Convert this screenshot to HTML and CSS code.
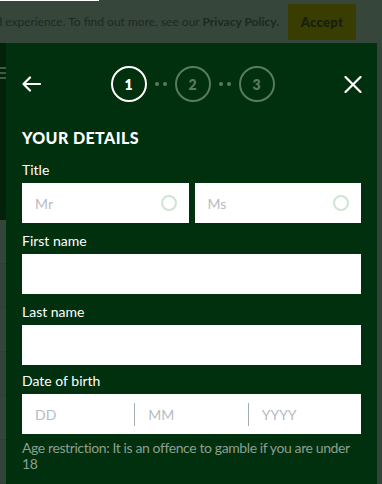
FILE: index.html
```html
<!DOCTYPE html>
<html lang="en">
<head>
    <meta charset="UTF-8">
    <meta name="viewport" content="width=device-width, initial-scale=1.0">
    <title>Register - Your details</title>
    <link rel="stylesheet" href="styles.css">
</head>
<body>
    <div class="top-strip"></div>
    <div class="cookie-bar">
        <p class="cookie-text">We use cookies to give you a personalized experience. To find out more, see our <b>Privacy Policy.</b></p>
        <button class="cookie-accept">Accept</button>
    </div>
    <div class="stage">
        <div class="page-edge">
            <div class="edge-nav"><span></span><span></span><span></span></div>
            <div class="edge-rows">
                <div class="edge-row"></div>
                <div class="edge-row alt"></div>
                <div class="edge-row"></div>
                <div class="edge-row alt"></div>
                <div class="edge-row"></div>
                <div class="edge-row alt"></div>
            </div>
        </div>
        <div class="modal">
            <div class="modal-header">
                <button class="icon-btn" aria-label="Back">
                    <svg width="19" height="16" viewBox="0 0 19 16"><path d="M18 8H1.5M8 1.5L1.5 8 8 14.5" fill="none" stroke="#fff" stroke-width="2.2" stroke-linecap="round" stroke-linejoin="round"/></svg>
                </button>
                <div class="steps">
                    <span class="step active">1</span>
                    <span class="step-dots"><i></i><i></i></span>
                    <span class="step">2</span>
                    <span class="step-dots"><i></i><i></i></span>
                    <span class="step">3</span>
                </div>
                <button class="icon-btn" aria-label="Close">
                    <svg width="18" height="17" viewBox="0 0 18 17"><path d="M1.5 1l15 15M16.5 1l-15 15" fill="none" stroke="#fff" stroke-width="2.2" stroke-linecap="round"/></svg>
                </button>
            </div>

            <h2 class="form-title">YOUR DETAILS</h2>

            <div class="field">
                <label>Title</label>
                <div class="title-options">
                    <div class="radio-box">
                        <span class="placeholder">Mr</span>
                        <span class="radio"></span>
                    </div>
                    <div class="radio-box">
                        <span class="placeholder">Ms</span>
                        <span class="radio"></span>
                    </div>
                </div>
            </div>

            <div class="field">
                <label>First name</label>
                <div class="text-input"></div>
            </div>

            <div class="field">
                <label>Last name</label>
                <div class="text-input"></div>
            </div>

            <div class="field dob">
                <label>Date of birth</label>
                <div class="dob-input">
                    <span class="dob-part">DD</span>
                    <span class="dob-part">MM</span>
                    <span class="dob-part">YYYY</span>
                </div>
                <p class="hint">Age restriction: It is an offence to gamble if you are under 18</p>
            </div>
        </div>
    </div>
</body>
</html>
```

FILE: styles.css
```css
body {
    margin: 0;
    width: 382px;
    height: 484px;
    overflow: hidden;
    background: #34443a;
    font-family: Lato, "Open Sans", sans-serif;
    position: relative;
}
.top-strip {
    position: absolute;
    top: 0;
    left: 0;
    width: 99px;
    height: 1px;
    background: #fff;
}
.cookie-bar {
    height: 43px;
    display: flex;
    align-items: center;
    justify-content: flex-end;
    padding-right: 26px;
    background: #36463b;
    overflow: hidden;
}
.cookie-text {
    margin: 0 9px 0 0;
    white-space: nowrap;
    font-size: 12px;
    color: #1c2a1f;
}
.cookie-text b {
    font-weight: 700;
}
.cookie-accept {
    flex-shrink: 0;
    width: 68px;
    height: 36px;
    border: none;
    background: #3a3d02;
    color: #17210e;
    font-family: inherit;
    font-weight: 800;
    font-size: 13px;
    letter-spacing: 0.3px;
    padding: 0;
}
.stage {
    display: flex;
    height: 441px;
}
.page-edge {
    width: 6px;
    display: flex;
    flex-direction: column;
}
.edge-nav {
    height: 177px;
    background: #03220b;
    display: flex;
    flex-direction: column;
    gap: 3px;
    padding-top: 24px;
    box-sizing: border-box;
}
.edge-nav span {
    height: 2px;
    background: #3e5a44;
}
.edge-rows {
    flex: 1;
    display: flex;
    flex-direction: column;
}
.edge-row {
    flex: 1;
    background: #34463a;
    border-bottom: 1px solid #2e3f34;
}
.edge-row.alt {
    background: #324338;
}
.modal {
    width: 371px;
    background: #01300e;
    padding: 0 16px;
    box-sizing: border-box;
    color: #fff;
}
.modal-header {
    display: flex;
    align-items: center;
    justify-content: space-between;
    height: 36px;
    margin-top: 23px;
}
.icon-btn {
    background: none;
    border: none;
    padding: 0;
    height: 20px;
    display: flex;
    align-items: center;
}
.icon-btn:last-child {
    margin-right: -1px;
}
.steps {
    display: flex;
    align-items: center;
}
.step {
    width: 36px;
    height: 36px;
    box-sizing: border-box;
    border: 2px solid #587a5e;
    border-radius: 50%;
    display: flex;
    align-items: center;
    justify-content: center;
    font-weight: 800;
    font-size: 14px;
    color: #587a5e;
}
.step.active {
    border-color: #fff;
    color: #fff;
}
.step-dots {
    width: 28px;
    display: flex;
    justify-content: center;
    gap: 4px;
}
.step-dots i {
    width: 4px;
    height: 4px;
    border-radius: 50%;
    background: #587a5e;
}
.form-title {
    margin: 26px 0 14px;
    font-size: 16px;
    font-weight: 900;
    letter-spacing: 0.4px;
    line-height: 20px;
}
.field {
    margin-bottom: 10px;
}
.field label {
    display: block;
    font-size: 14px;
    line-height: 16px;
    margin-bottom: 5px;
}
.field.dob {
    margin-top: -2px;
}
.title-options {
    display: flex;
    gap: 6px;
}
.radio-box {
    flex: 1;
    height: 40px;
    background: #fff;
    display: flex;
    align-items: center;
    justify-content: space-between;
    padding: 0 12px 0 13px;
}
.placeholder,
.dob-part {
    font-size: 14px;
    color: #b4bcc4;
}
.radio {
    width: 12px;
    height: 12px;
    border: 2px solid #cfe5d0;
    border-radius: 50%;
}
.text-input {
    height: 40px;
    background: #fff;
}
.dob-input {
    height: 40px;
    background: #fff;
    display: flex;
    align-items: center;
}
.dob-part {
    flex: 1;
    padding-left: 13px;
    line-height: 23px;
    border-left: 1px solid #a3adb6;
}
.dob-part:first-child {
    border-left: none;
}
.hint {
    margin: 6px 0 0;
    font-size: 14px;
    line-height: 16px;
    color: #8c9f90;
    letter-spacing: -0.4px;
}
```
